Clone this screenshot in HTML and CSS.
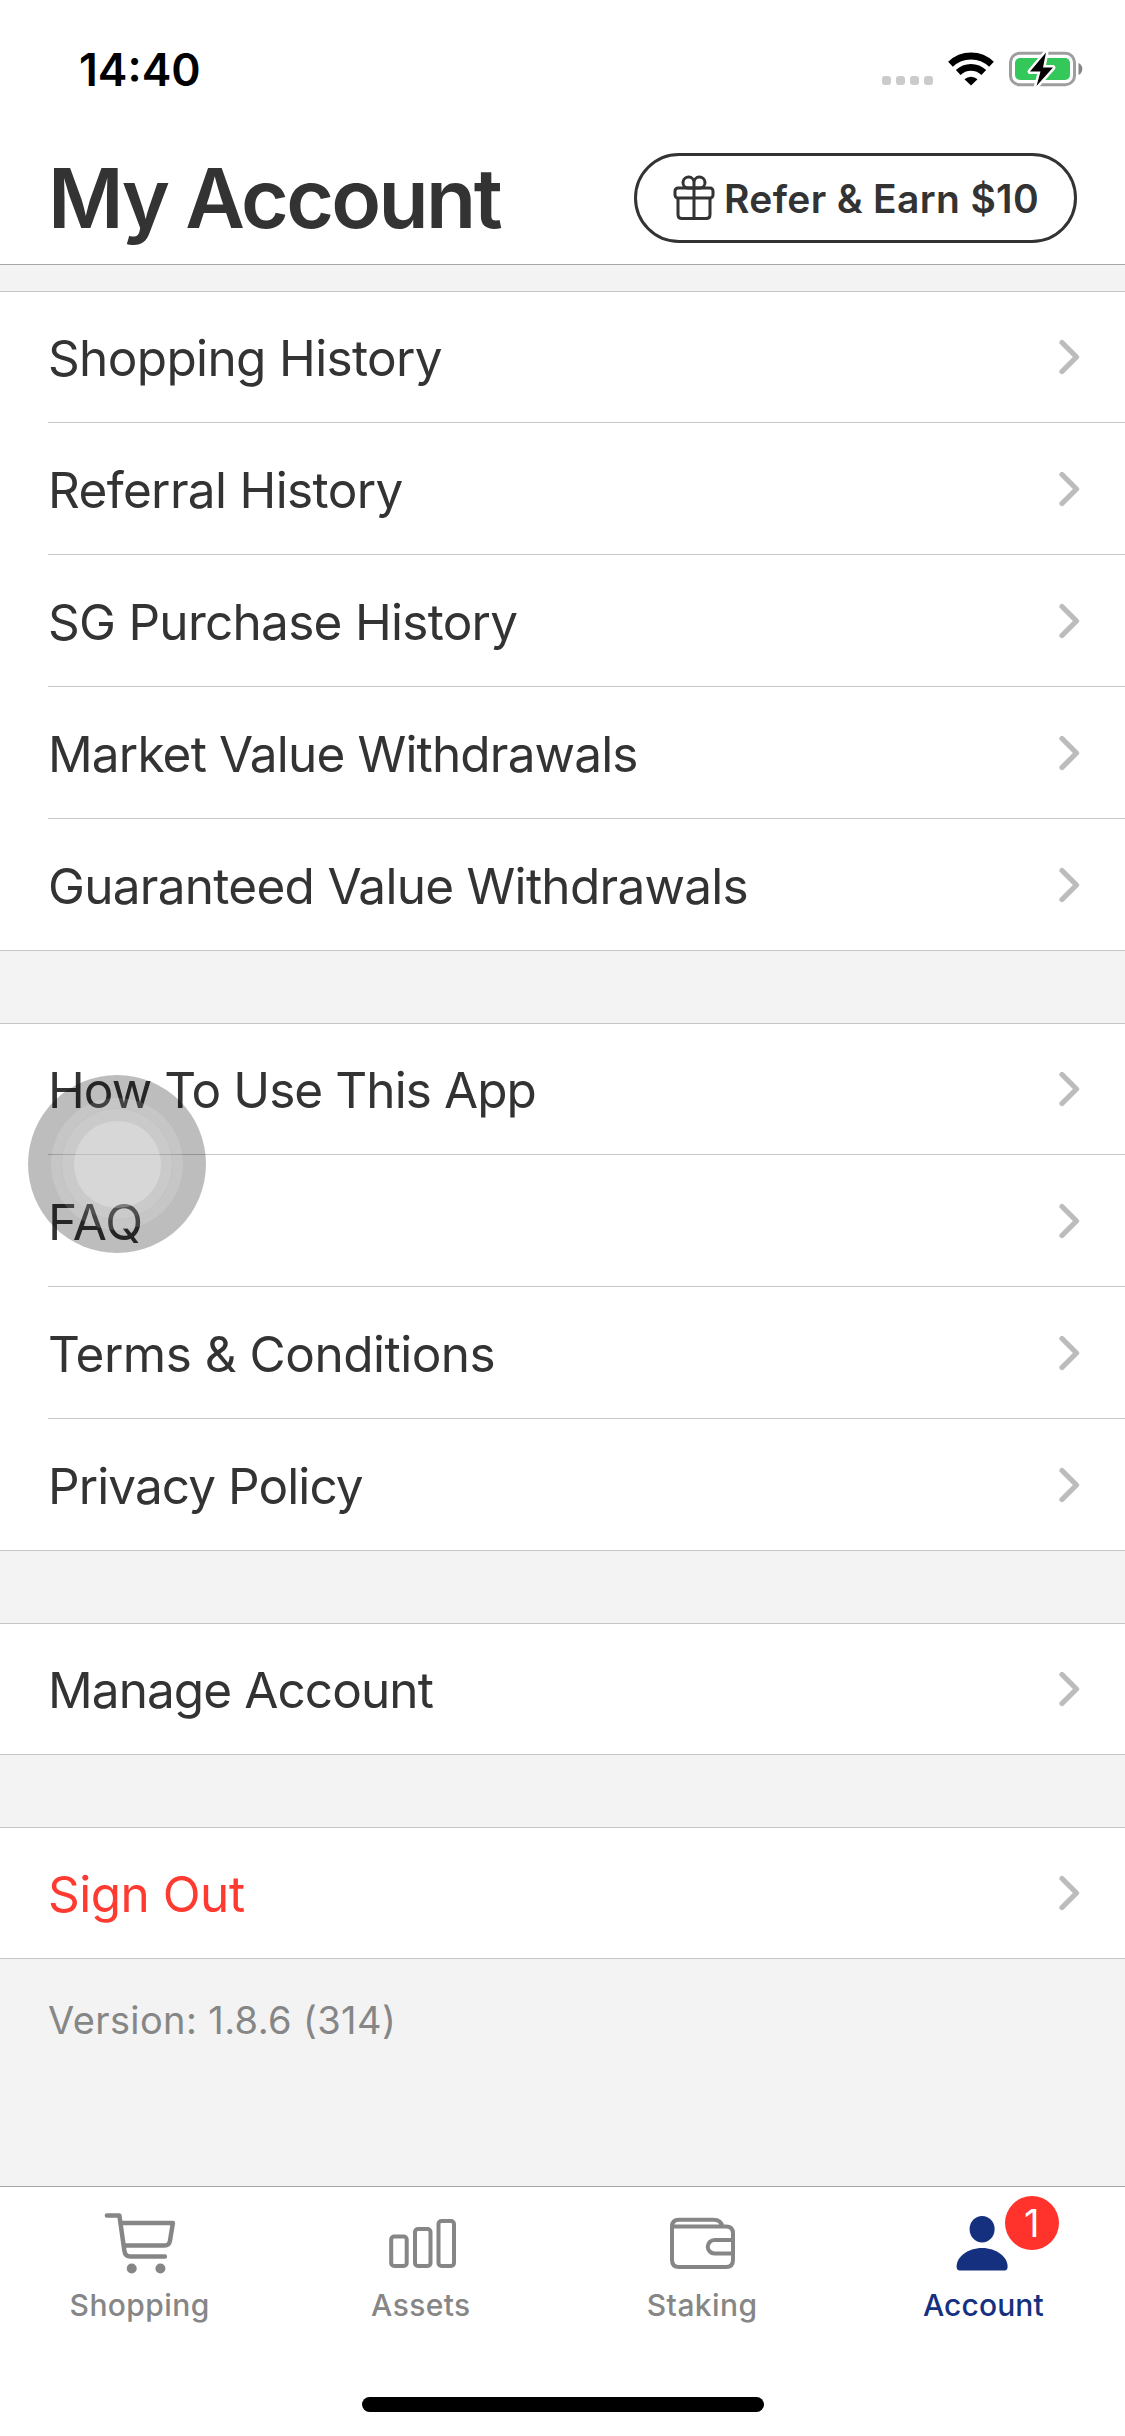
FILE: index.html
```html
<!DOCTYPE html>
<html lang="en">
<head>
<meta charset="utf-8">
<title>My Account</title>
<link rel="stylesheet" href="styles.css">
</head>
<body>
<svg width="0" height="0" class="defs"><symbol id="chev" viewBox="0 0 22 36"><path d="M3 3.500L17.500 18L3 32.500" fill="none" stroke="#bcbcbc" stroke-width="5.300" stroke-linecap="round" stroke-linejoin="round"/></symbol></svg>
<div class="screen">
  <header class="header">
    <div class="status">
      <span class="time">14:40</span>
      <svg class="status-icons" width="204" height="44" viewBox="880 48 204 44">
        <g fill="#cbcbcb"><rect x="882" y="76" width="9" height="9" rx="3"/><rect x="896" y="76" width="9" height="9" rx="3"/><rect x="910" y="76" width="9" height="9" rx="3"/><rect x="924" y="76" width="9" height="9" rx="3"/></g>
        <g fill="none" stroke="#000" stroke-width="6.8"><path d="M950.5 64.3A29.500 29.500 0 0 1 991.500 64.300"/><path d="M958.200 72.500A18.400 18.400 0 0 1 983.800 72.500"/></g>
        <path d="M964.500 79.200A9.500 9.500 0 0 1 977.500 79.200L971 85.500Z"/>
        <rect x="1010.500" y="53.300" width="64" height="31.400" rx="9" fill="none" stroke="#9e9e9e" stroke-width="3"/>
        <path d="M1078.500 63q3.800 1.800 3.800 6t-3.800 6z" fill="#858585"/>
        <rect x="1015" y="58" width="55" height="22" rx="5" fill="#34c759"/>
        <path d="M1046 52.500L1030 71.500H1040.500L1036.500 86L1053 67.500H1043Z" fill="#000" stroke="#fff" stroke-width="5" stroke-linejoin="round" paint-order="stroke"/>
      </svg>
    </div>
    <div class="titlebar">
      <h1 class="title">My Account</h1>
      <button class="refer">
        <svg class="gift" width="42" height="46" viewBox="0 0 42 46" fill="none" stroke="#333" stroke-width="3"><rect x="2" y="13" width="38" height="10" rx="3"/><path d="M5 23V39.500Q5 43.500 9 43.500H33Q37 43.500 37 39.500V23M21 13V43.500M21 13H14.500A5.500 5.500 0 1 1 21 7.500ZM21 13H27.500A5.500 5.500 0 1 0 21 7.500Z"/></svg>
        <span class="refer-text">Refer &amp; Earn $10</span>
      </button>
    </div>
  </header>
  <main class="content">
    <ul class="group">
      <li class="row"><span class="label snug">Shopping History</span><svg class="chevron"><use href="#chev"/></svg></li>
      <li class="row"><span class="label snug">Referral History</span><svg class="chevron"><use href="#chev"/></svg></li>
      <li class="row"><span class="label close">SG Purchase History</span><svg class="chevron"><use href="#chev"/></svg></li>
      <li class="row"><span class="label tight">Market Value Withdrawals</span><svg class="chevron"><use href="#chev"/></svg></li>
      <li class="row"><span class="label close">Guaranteed Value Withdrawals</span><svg class="chevron"><use href="#chev"/></svg></li>
    </ul>
    <ul class="group">
      <li class="row"><span class="label tightest">How To Use This App</span><svg class="chevron"><use href="#chev"/></svg></li>
      <li class="row"><span class="label">FAQ</span><svg class="chevron"><use href="#chev"/></svg></li>
      <li class="row"><span class="label loose">Terms &amp; Conditions</span><svg class="chevron"><use href="#chev"/></svg></li>
      <li class="row"><span class="label tightest">Privacy Policy</span><svg class="chevron"><use href="#chev"/></svg></li>
    </ul>
    <ul class="group">
      <li class="row"><span class="label tightest">Manage Account</span><svg class="chevron"><use href="#chev"/></svg></li>
    </ul>
    <ul class="group">
      <li class="row"><span class="label loose danger">Sign Out</span><svg class="chevron"><use href="#chev"/></svg></li>
    </ul>
    <p class="version">Version: 1.8.6 (314)</p>
  </main>
  <nav class="tabbar">
    <a class="tab">
      <svg class="tab-icon" width="80" height="70" viewBox="100.600 2208 80 70" fill="none" stroke="#868686" stroke-width="4.500" stroke-linecap="round" stroke-linejoin="round"><path d="M106.500 2215.500H119L124 2251Q124.800 2256.500 130 2256.500H164.500M121.500 2223H172.500L169.500 2241Q168.800 2245.500 164 2245.500H125"/><g fill="#868686" stroke="none"><circle cx="131.300" cy="2268.500" r="5"/><circle cx="160" cy="2268.500" r="5"/></g></svg>
      <span class="tab-label">Shopping</span>
    </a>
    <a class="tab">
      <svg class="tab-icon" width="80" height="70" viewBox="382 2208 80 70" fill="none" stroke="#868686" stroke-width="4"><rect x="391.200" y="2236.500" width="15.500" height="29.500" rx="3"/><rect x="415" y="2229" width="15.500" height="37" rx="3"/><rect x="438.500" y="2221" width="15.500" height="45" rx="3"/></svg>
      <span class="tab-label">Assets</span>
    </a>
    <a class="tab">
      <svg class="tab-icon" width="80" height="70" viewBox="663 2208 80 70" fill="none" stroke="#868686" stroke-width="4"><path d="M672 2226.500V2260Q672 2267 679 2267H726Q733 2267 733 2260V2233.500Q733 2226.500 726 2226.500H672Q672 2219.800 679 2219.800H713Q721.500 2219.800 722 2226.500M733 2240H714.500A6.700 6.700 0 0 0 714.500 2253.500H733"/></svg>
      <span class="tab-label">Staking</span>
    </a>
    <a class="tab active">
      <svg class="tab-icon" width="80" height="70" viewBox="944.400 2208 80 70" fill="#15307f"><ellipse cx="982.500" cy="2229.200" rx="12.500" ry="13.300"/><path d="M960 2270.500Q957 2270.500 957 2266.500C957 2257 968 2248 982.500 2248S1008 2257 1008 2266.500Q1008 2270.500 1005 2270.500Z"/></svg>
      <span class="tab-label">Account</span>
      <span class="badge">1</span>
    </a>
  </nav>
  <div class="home"></div>
  <div class="touch"><div class="touch-a"><div class="touch-b"><div class="touch-c"></div></div></div></div>
</div>
</body>
</html>
```
FILE: styles.css
```css
* { box-sizing: border-box; }
body, h1, ul, p { margin: 0; padding: 0; }
body { background: #fff; font-family: Inter, "Liberation Sans", sans-serif; color: #333; }
.defs { display: none; }
.screen { position: relative; width: 1125px; height: 2436px; display: flex; flex-direction: column; overflow: hidden; }
.header { height: 265px; flex: none; background: #fff; border-bottom: 1px solid #a7a7a7; }
.status { height: 140px; padding: 48px 41px 0 79px; display: flex; justify-content: space-between; align-items: flex-start; }
.time { color: #000; font-size: 44.500px; font-weight: 600; line-height: 44px; }
.titlebar { display: flex; justify-content: space-between; align-items: center; padding: 0 48px 0 48px; height: 116px; }
.title { padding-top: 2px; font-size: 82px; line-height: 100px; font-weight: 600; letter-spacing: -2.650px; white-space: nowrap; }
.refer { width: 443px; height: 90px; padding: 0 0 0 36px; display: flex; align-items: center; gap: 9px; border: 3px solid #333; border-radius: 45px; background: #fff; color: #333; font: inherit; }
.refer-text { padding-top: 1px; font-size: 39px; font-weight: 600; line-height: 46px; letter-spacing: .350px; white-space: nowrap; }
.content { flex: 1; padding-top: 26px; background: #f3f3f3; display: flex; flex-direction: column; gap: 72px; }
.group { list-style: none; background: #fff; border-top: 1px solid #c6c6c6; border-bottom: 1px solid #c6c6c6; }
.row { height: 132px; margin-left: 48px; padding-right: 44px; display: flex; align-items: center; justify-content: space-between; border-bottom: 1px solid #c6c6c6; }
.row:first-child { height: 131px; }
.row:last-child { height: 131px; border-bottom: 0; }
.row:only-child { height: 130px; }
.label { padding-top: 2px; font-size: 49.500px; line-height: 60px; white-space: nowrap; }
.loose { letter-spacing: -.500px; }
.snug { letter-spacing: -.650px; }
.close { letter-spacing: -.720px; }
.tight { letter-spacing: -.840px; }
.tightest { letter-spacing: -.920px; }
.danger { color: #ff3a30; }
.chevron { width: 22px; height: 36px; flex: none; }
.version { margin-top: -34px; padding-left: 48px; font-size: 38px; line-height: 46px; letter-spacing: .380px; color: #868686; }
.tabbar { height: 250px; flex: none; display: grid; grid-template-columns: repeat(4, 1fr); border-top: 1px solid #a7a7a7; background: #fff; }
.tab { position: relative; padding-top: 21px; display: flex; flex-direction: column; align-items: center; color: #868686; }
.tab-label { font-size: 30px; line-height: 36px; margin: 9px 2px 0 0; font-weight: 500; letter-spacing: .400px; }
.active { color: #15307f; }
.active .tab-label { letter-spacing: .100px; }
.badge { position: absolute; left: 161px; top: 9px; width: 54px; height: 54px; border-radius: 50%; background: #ff332c; color: #fff; font-size: 38px; line-height: 54px; text-align: center; }
.home { position: absolute; left: 362px; top: 2397px; width: 402px; height: 15px; border-radius: 8px; background: #000; }
.touch { position: absolute; left: 28px; top: 1075px; width: 178px; height: 178px; border-radius: 50%; background: rgba(0,0,0,.26); display: grid; place-items: center; }
.touch-a { width: 132px; height: 132px; border-radius: 50%; background: rgba(255,255,255,.14); display: grid; place-items: center; }
.touch-b { width: 112px; height: 112px; border-radius: 50%; border: 1px solid rgba(0,0,0,.04); background: rgba(255,255,255,.07); display: grid; place-items: center; }
.touch-c { width: 87px; height: 87px; border-radius: 50%; background: rgba(255,255,255,.25); }
```
